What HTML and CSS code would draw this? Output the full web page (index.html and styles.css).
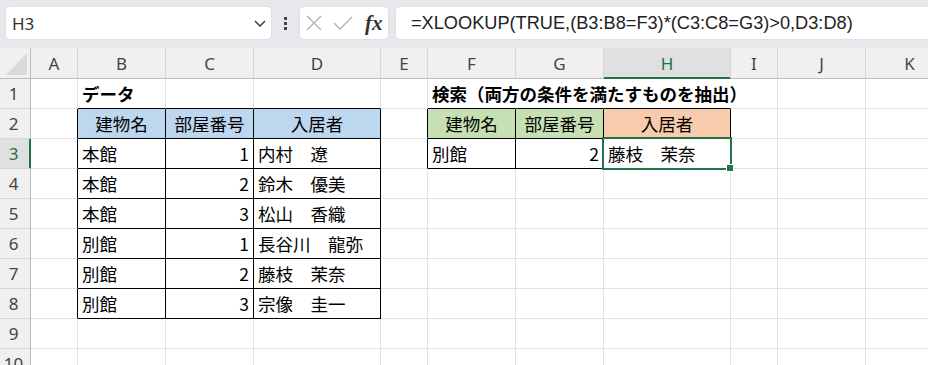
FILE: index.html
```html
<!DOCTYPE html>
<html lang="ja">
<head>
  <meta charset="UTF-8" />
  <title>XLOOKUP 複数条件</title>
  <link rel="stylesheet" href="styles.css">
</head>
<body>

  <div class="toolbar">
    <div class="namebox">
      <span>H3</span>
      <svg class="chev" width="12" height="7" viewBox="0 0 12 7"><polyline points="1,1 6,6 11,1" /></svg>
    </div>
    <div class="more"><i></i><i></i><i></i></div>
    <div class="fxbox">
      <svg class="cancel" width="16" height="16" viewBox="0 0 16 16"><line x1="1" y1="1" x2="15" y2="15" /><line x1="15" y1="1" x2="1" y2="15" /></svg>
      <svg class="enter" width="20" height="14" viewBox="0 0 20 14"><polyline points="1,7 7,13 19,1" /></svg>
      <span class="fx">fx</span>
    </div>
    <div class="formula">=XLOOKUP(TRUE,(B3:B8=F3)*(C3:C8=G3)&gt;0,D3:D8)</div>
  </div>

  <div class="sheet">
    <!-- column headers -->
    <div class="corner"><span class="tri"></span></div>
    <div class="hd">A</div>
    <div class="hd">B</div>
    <div class="hd">C</div>
    <div class="hd">D</div>
    <div class="hd">E</div>
    <div class="hd">F</div>
    <div class="hd">G</div>
    <div class="hd hsel">H</div>
    <div class="hd">I</div>
    <div class="hd">J</div>
    <div class="hd">K</div>

    <!-- row 1 -->
    <div class="rh">1</div>
    <div class="c"></div>
    <div class="c bt title">データ</div>
    <div class="c bt"></div>
    <div class="c bt"></div>
    <div class="c"></div>
    <div class="c bt nr title">検索（両方の条件を満たすものを抽出）</div>
    <div class="c bt nr"></div>
    <div class="c bt nr"></div>
    <div class="c"></div>
    <div class="c"></div>
    <div class="c"></div>

    <!-- row 2 -->
    <div class="rh">2</div>
    <div class="c br"></div>
    <div class="c tb blue ctr">建物名</div>
    <div class="c tb blue ctr">部屋番号</div>
    <div class="c tb blue ctr">入居者</div>
    <div class="c br"></div>
    <div class="c tb green ctr">建物名</div>
    <div class="c tb green ctr">部屋番号</div>
    <div class="c tb orange ctr">入居者</div>
    <div class="c"></div>
    <div class="c"></div>
    <div class="c"></div>

    <!-- row 3 -->
    <div class="rh rsel">3</div>
    <div class="c br"></div>
    <div class="c tb">本館</div>
    <div class="c tb num">1</div>
    <div class="c tb">内村　遼</div>
    <div class="c br"></div>
    <div class="c tb">別館</div>
    <div class="c tb num">2</div>
    <div class="c tb sel">藤枝　茉奈</div>
    <div class="c"></div>
    <div class="c"></div>
    <div class="c"></div>

    <!-- row 4 -->
    <div class="rh">4</div>
    <div class="c br"></div>
    <div class="c tb">本館</div>
    <div class="c tb num">2</div>
    <div class="c tb">鈴木　優美</div>
    <div class="c"></div>
    <div class="c"></div>
    <div class="c"></div>
    <div class="c"></div>
    <div class="c"></div>
    <div class="c"></div>
    <div class="c"></div>

    <!-- row 5 -->
    <div class="rh">5</div>
    <div class="c br"></div>
    <div class="c tb">本館</div>
    <div class="c tb num">3</div>
    <div class="c tb">松山　香織</div>
    <div class="c"></div>
    <div class="c"></div>
    <div class="c"></div>
    <div class="c"></div>
    <div class="c"></div>
    <div class="c"></div>
    <div class="c"></div>

    <!-- row 6 -->
    <div class="rh">6</div>
    <div class="c br"></div>
    <div class="c tb">別館</div>
    <div class="c tb num">1</div>
    <div class="c tb">長谷川　龍弥</div>
    <div class="c"></div>
    <div class="c"></div>
    <div class="c"></div>
    <div class="c"></div>
    <div class="c"></div>
    <div class="c"></div>
    <div class="c"></div>

    <!-- row 7 -->
    <div class="rh">7</div>
    <div class="c br"></div>
    <div class="c tb">別館</div>
    <div class="c tb num">2</div>
    <div class="c tb">藤枝　茉奈</div>
    <div class="c"></div>
    <div class="c"></div>
    <div class="c"></div>
    <div class="c"></div>
    <div class="c"></div>
    <div class="c"></div>
    <div class="c"></div>

    <!-- row 8 -->
    <div class="rh">8</div>
    <div class="c br"></div>
    <div class="c tb">別館</div>
    <div class="c tb num">3</div>
    <div class="c tb">宗像　圭一</div>
    <div class="c"></div>
    <div class="c"></div>
    <div class="c"></div>
    <div class="c"></div>
    <div class="c"></div>
    <div class="c"></div>
    <div class="c"></div>

    <!-- row 9 -->
    <div class="rh">9</div>
    <div class="c"></div>
    <div class="c"></div>
    <div class="c"></div>
    <div class="c"></div>
    <div class="c"></div>
    <div class="c"></div>
    <div class="c"></div>
    <div class="c"></div>
    <div class="c"></div>
    <div class="c"></div>
    <div class="c"></div>

    <!-- row 10 -->
    <div class="rh">10</div>
    <div class="c"></div>
    <div class="c"></div>
    <div class="c"></div>
    <div class="c"></div>
    <div class="c"></div>
    <div class="c"></div>
    <div class="c"></div>
    <div class="c"></div>
    <div class="c"></div>
    <div class="c"></div>
    <div class="c"></div>
  </div>

</body>
</html>
```

FILE: styles.css
```css
body {
  margin: 0;
  background: #fff;
  font-family: "Noto Sans CJK JP", sans-serif;
  overflow: hidden;
}

/* formula bar */
.toolbar {
  height: 48px;
  box-sizing: border-box;
  background: #e6e8ec;
  display: flex;
  align-items: flex-start;
  padding: 6px 0 0 5px;
}

.namebox {
  width: 267px;
  height: 34px;
  box-sizing: border-box;
  background: #fff;
  border: 1px solid #dde0e5;
  border-radius: 5px;
  display: flex;
  align-items: center;
  justify-content: space-between;
  padding: 0 5px 0 6px;
  font-family: "Noto Sans", sans-serif;
  font-size: 17px;
  color: #333;
  flex-shrink: 0;
}

.chev polyline {
  fill: none;
  stroke: #333;
  stroke-width: 1.4;
}

.more {
  width: 27px;
  height: 34px;
  display: flex;
  flex-direction: column;
  align-items: center;
  justify-content: center;
  gap: 2px;
  flex-shrink: 0;
}

.more i {
  width: 3px;
  height: 3px;
  background: #444;
}

.fxbox {
  width: 90px;
  height: 34px;
  box-sizing: border-box;
  background: #fff;
  border: 1px solid #dde0e5;
  border-radius: 5px;
  display: flex;
  align-items: center;
  padding-left: 6px;
  flex-shrink: 0;
}

.cancel line, .enter polyline {
  fill: none;
  stroke: #b4b4b4;
  stroke-width: 1.4;
}

.enter {
  margin-left: 11px;
}

.fx {
  margin-left: 12px;
  font-family: "Liberation Serif", serif;
  font-style: italic;
  font-weight: bold;
  font-size: 21px;
  color: #333;
}

.formula {
  width: 560px;
  height: 34px;
  margin-left: 6px;
  box-sizing: border-box;
  background: #fff;
  border: 1px solid #dde0e5;
  border-radius: 5px;
  display: flex;
  align-items: center;
  padding-left: 15px;
  font-family: "Liberation Sans", sans-serif;
  font-size: 18.2px;
  color: #222;
  flex-shrink: 0;
  white-space: nowrap;
}

/* grid */
.sheet {
  display: grid;
  grid-template-columns: 31px 47px 88px 88px 127px 47px 88px 88px 127px 47px 88px 88px;
  grid-template-rows: 31px repeat(10, 30px);
}

.sheet > div {
  box-sizing: border-box;
  border-right: 1px solid #e1e1e1;
  border-bottom: 1px solid #e1e1e1;
  display: flex;
  align-items: center;
  white-space: nowrap;
}

.corner, .hd, .rh {
  background: #f0f0f0;
  font-family: "Noto Sans", sans-serif;
  font-size: 17px;
  color: #444;
  justify-content: center;
}

.sheet > .corner {
  border-right-color: #bdbdbd;
  border-bottom-color: #bdbdbd;
  position: relative;
}

.tri {
  position: absolute;
  left: 6px;
  top: 5px;
  width: 21px;
  height: 22px;
  background: #d9d9d9;
  clip-path: polygon(100% 0, 100% 100%, 0 100%);
}

.sheet > .hd {
  border-right-color: #d6d6d6;
  border-bottom-color: #bdbdbd;
  padding-top: 1px;
}

.sheet > .rh {
  border-right-color: #bdbdbd;
  border-bottom-color: #d6d6d6;
  padding-right: 3px;
}

.sheet > .hsel {
  background: #e0e0e0;
  color: #217346;
  border-bottom-color: #217346;
  box-shadow: inset 0 -1px 0 #217346;
}

.sheet > .rsel {
  background: #e0e0e0;
  color: #217346;
  border-right-color: #217346;
  box-shadow: inset -1px 0 0 #217346;
}

.c {
  font-size: 17.5px;
  line-height: 1;
  color: #000;
  padding: 1px 4px 0;
}

.title {
  font-weight: bold;
  overflow: visible;
}

.sheet > .bt { border-bottom-color: #000; }
.sheet > .br { border-right-color: #000; }
.sheet > .nr { border-right-color: transparent; }

.sheet > .tb {
  border-right-color: #000;
  border-bottom-color: #000;
}

.blue { background: #bdd7ee; }
.green { background: #c6e0b4; }
.orange { background: #f8cbad; }

.ctr { justify-content: center; }
.num { justify-content: flex-end; }

.sel {
  position: relative;
}

.sel::after {
  content: "";
  position: absolute;
  top: -2px;
  left: -2px;
  right: -2px;
  bottom: -2px;
  border: 2px solid #217346;
  z-index: 1;
}

.sel::before {
  content: "";
  position: absolute;
  right: -4px;
  bottom: -4px;
  width: 6px;
  height: 6px;
  background: #217346;
  border: 1px solid #fff;
  z-index: 2;
}
```
